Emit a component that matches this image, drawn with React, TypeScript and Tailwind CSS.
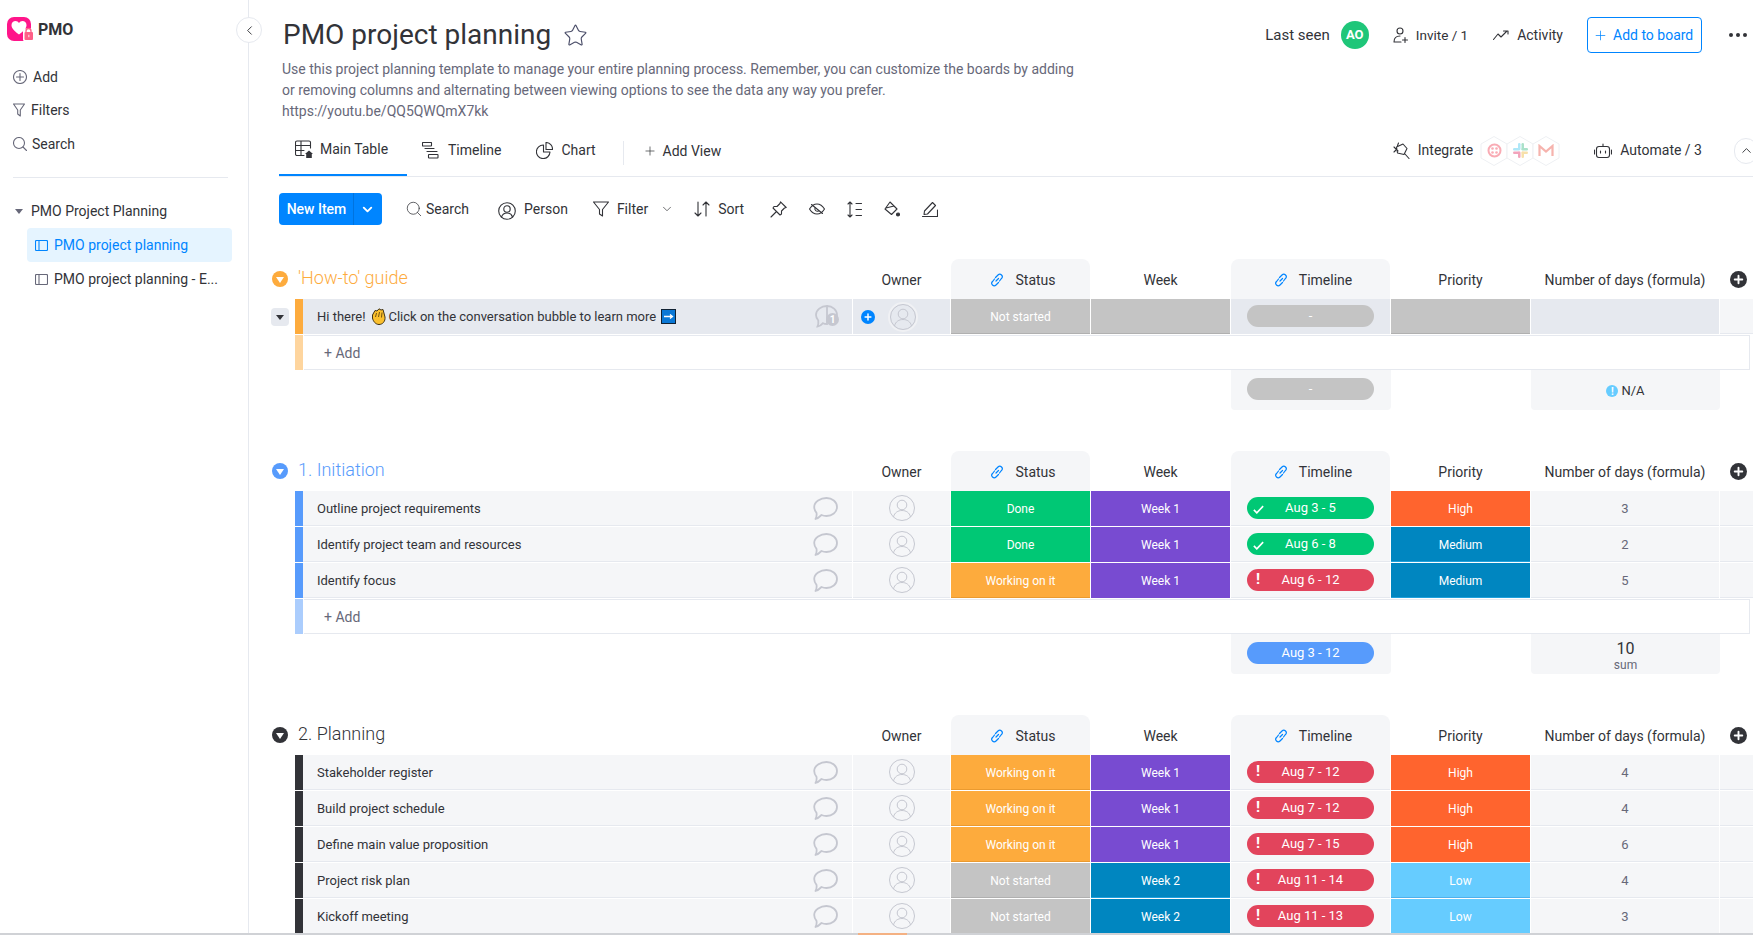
import * as React from "react";
import { ChevronDown, ChevronLeft, ChevronUp, Plus, Search, Star } from "lucide-react";

const gray = "#676879";

function Ico({ w = 18, h = 18, vb = "0 0 20 20", children, className = "" }: { w?: number; h?: number; vb?: string; children: React.ReactNode; className?: string }) {
  return (
    <svg width={w} height={h} viewBox={vb} fill="none" stroke="currentColor" strokeWidth="1.1" strokeLinecap="round" strokeLinejoin="round" className={"shrink-0 " + className}>
      {children}
    </svg>
  );
}

function Logo() {
  return (
    <svg width="27" height="26" viewBox="0 0 27 26" className="shrink-0">
      <rect x="0" y="1" width="24" height="24" rx="7" fill="#ff158a" />
      <path d="M12 18.5 C6 14 4.5 11.5 4.5 9 C4.5 6.5 6.5 5 8.5 5 C10 5 11.2 5.8 12 7 C12.8 5.8 14 5 15.5 5 C17.5 5 19.5 6.5 19.5 9 C19.5 11.5 18 14 12 18.5Z" fill="#fff" />
      <rect x="16" y="12.5" width="11" height="13" rx="2" fill="#fff" />
      <path d="M19 16.5 V15 a2.5 2.5 0 0 1 5 0 V16.5" fill="none" stroke="#ff5f87" strokeWidth="1.3" />
      <rect x="17.5" y="16" width="8.5" height="8" rx="1" fill="#ff5f87" />
      <rect x="21.2" y="18.8" width="1.2" height="2.4" fill="#ffd0dc" />
    </svg>
  );
}

function BoardIcon() {
  return (
    <Ico w={13} h={11} vb="0 0 13 11">
      <rect x="0.5" y="0.5" width="12" height="10" rx="1" />
      <path d="M4 0.5 V10.5" />
    </Ico>
  );
}

function SideLink({ icon, label, textClass, height }: { icon: React.ReactNode; label: string; textClass: string; height: string }) {
  return (
    <div className={"flex items-center pl-[13px] text-[14px] text-[#323338] " + height}>
      <span className="flex text-[#676879]">{icon}</span>
      <span className={textClass}>{label}</span>
    </div>
  );
}

function Sidebar() {
  return (
    <aside className="relative flex w-[249px] shrink-0 flex-col border-r border-[#e6e9ef]">
      <div className="mt-[16px] flex h-[26px] items-center pl-[7px]">
        <Logo />
        <span className="ml-[4px] mt-[1px] text-[16px] font-bold text-[#323338]">PMO</span>
      </div>
      <div className="mt-[19px] flex flex-col">
        <SideLink label="Add" height="h-[32px]" textClass="ml-[6px]" icon={<Ico w={14} h={14} vb="0 0 14 14"><circle cx="7" cy="7" r="6.5" /><path d="M7 3.5 V10.5 M3.5 7 H10.5" /></Ico>} />
        <SideLink label="Filters" height="h-[34px]" textClass="ml-[6px]" icon={<Ico w={12} h={14} vb="0 0 12 14"><path d="M0.5 1 H11.5 L7.3 7 V13 L4.7 11 V7 Z" /></Ico>} />
        <SideLink label="Search" height="h-[34px]" textClass="ml-[5px]" icon={<Ico w={14} h={14} vb="0 0 14 14"><circle cx="6" cy="6" r="5.5" /><path d="M10 10 L13.5 13.5" /></Ico>} />
      </div>
      <div className="mx-[13px] mt-[16px] w-[215px] border-t border-[#e6e9ef]" />
      <div className="mt-[17px] flex h-[33px] items-center pl-[15px] text-[14px] text-[#323338]">
        <span className="h-0 w-0 border-x-[4px] border-t-[5px] border-x-transparent border-t-[#676879]" />
        <span className="ml-[8px]">PMO Project Planning</span>
      </div>
      <div className="ml-[27px] flex h-[34px] w-[205px] items-center rounded-[4px] bg-[#e5f4ff] pl-[8px] text-[14px] text-[#0085ff]">
        <BoardIcon />
        <span className="ml-[6px]">PMO project planning</span>
      </div>
      <div className="ml-[27px] flex h-[34px] w-[205px] items-center pl-[8px] text-[14px] text-[#323338]">
        <span className="text-[#676879]"><BoardIcon /></span>
        <span className="ml-[6px] truncate">PMO project planning - E...</span>
      </div>
      <button className="absolute left-[236px] top-[17px] flex h-[26px] w-[26px] items-center justify-center rounded-full border border-[#e6e9ef] bg-white text-[#323338]">
        <ChevronLeft size={15} strokeWidth={1.5} />
      </button>
    </aside>
  );
}

function TopActions() {
  return (
    <div className="flex h-[40px] items-center pr-[6px] text-[14px] text-[#323338]">
      <span className="text-[15px]">Last seen</span>
      <span className="ml-[11px] flex h-[28px] w-[28px] items-center justify-center rounded-full bg-[#1fc679] text-[13px] font-bold text-white">AO</span>
      <span className="ml-[24px] text-[#323338]">
        <Ico w={15} h={16} vb="0 0 15 16"><circle cx="7" cy="4" r="3" /><path d="M1 15 C1 11 3 9 7 9 M1 15 H8 M9.5 13 H14.5 M12 10.5 V15.5" /></Ico>
      </span>
      <span className="ml-[8px] text-[13.5px] text-[#323338]">Invite / 1</span>
      <span className="ml-[25px]">
        <Ico w={16} h={10} vb="0 0 16 10"><path d="M0.5 9.5 L5 4 L8 7 L14 1 M10.5 1 H15 V4" /></Ico>
      </span>
      <span className="ml-[8px]">Activity</span>
      <button className="ml-[24px] flex h-[36px] w-[115px] items-center rounded-[4px] border border-[#0085ff] pl-[5px] text-[#0085ff]">
        <Plus size={15} strokeWidth={1.2} />
        <span className="ml-[5px]">Add to board</span>
      </button>
      <span className="ml-[27px] flex gap-[3px]">
        <i className="h-[4px] w-[4px] rounded-full bg-[#323338]" />
        <i className="h-[4px] w-[4px] rounded-full bg-[#323338]" />
        <i className="h-[4px] w-[4px] rounded-full bg-[#323338]" />
      </span>
    </div>
  );
}

function Hex({ children }: { children: React.ReactNode }) {
  return (
    <span className="relative -mx-px flex h-[30px] w-[28px] items-center justify-center">
      <svg width="28" height="30" viewBox="0 0 28 30" className="absolute inset-0" fill="#fff" stroke="#eef0f3">
        <path d="M14 0.5 L27 8 V22 L14 29.5 L1 22 V8 Z" />
      </svg>
      <span className="relative flex opacity-40">{children}</span>
    </span>
  );
}

function Tabs() {
  return (
    <div className="flex h-[55px] border-b border-[#e6e9ef] text-[14px] text-[#323338]">
      <div className="flex h-[54px] w-[128px] items-center border-b-2 border-[#0085ff] pl-[16px] pt-[3px]">
        <Ico w={20} h={20} vb="0 0 20 20"><path d="M9 15.5 H2 a1.5 1.5 0 0 1 -1.5 -1.5 V2.500 A1.500 1.500 0 0 1 2 1 H14 a1.500 1.500 0 0 1 1.500 1.500 V8 M0.500 5.500 H15.500 M0.500 10.500 H9 M6 1 V15.500" /><path d="M10 14 L14 10.500 L18 14 H16.800 V18 H11.200 V14 Z" fill="currentColor" stroke="none" /></Ico>
        <span className="ml-[5px]">Main Table</span>
      </div>
      <div className="ml-[15px] flex items-center pt-[3px]">
        <Ico w={17} h={17} vb="0 0 17 17"><rect x="0.500" y="0.500" width="9" height="3.500" rx="0.500" /><path d="M3 6.500 H12" /><rect x="6.500" y="12.500" width="9.500" height="3.500" rx="0.500" /><path d="M5 9.500 H15" /></Ico>
        <span className="ml-[9px]">Timeline</span>
      </div>
      <div className="ml-[35px] flex items-center pt-[3px]">
        <Ico w={17} h={17} vb="0 0 17 17"><path d="M7.500 3 A6.800 6.800 0 1 0 14 10 H7.500 Z" /><path d="M10 0.500 A6.500 6.500 0 0 1 16.500 7.500 H10 Z" /></Ico>
        <span className="ml-[8px]">Chart</span>
      </div>
      <div className="ml-[27px] mt-[19px] h-[24px] border-l border-[#e6e9ef]" />
      <div className="ml-[19px] flex items-center pt-[4px]">
        <Plus size={14} strokeWidth={1.2} />
        <span className="ml-[6px]">Add View</span>
      </div>
      <div className="ml-auto flex items-center pt-[3px]">
        <Ico w={17} h={17} vb="0 0 17 17"><path d="M1 5 L5 9 M5.500 1 L4.500 3.500 M3.500 5 L10 2 L14 6.500 L11 12.500 L4.500 11 Z" /><path d="M12 12 L16 16.500 M1 10 L3 8" /></Ico>
        <span className="ml-[8px]">Integrate</span>
        <span className="ml-[8px] flex">
          <Hex><svg width="15" height="15" viewBox="0 0 15 15"><circle cx="7.500" cy="7.500" r="6" fill="none" stroke="#f22f46" strokeWidth="2" /><g fill="#f22f46"><circle cx="5.500" cy="5.500" r="1.300" /><circle cx="9.500" cy="5.500" r="1.300" /><circle cx="5.500" cy="9.500" r="1.300" /><circle cx="9.500" cy="9.500" r="1.300" /></g></svg></Hex>
          <Hex><svg width="15" height="15" viewBox="0 0 15 15"><rect x="0" y="5" width="7" height="2.500" rx="1.200" fill="#36c5f0" /><rect x="5" y="0" width="2.500" height="7" rx="1.200" fill="#36c5f0" /><rect x="8.500" y="0" width="2.500" height="7" rx="1.200" fill="#2eb67d" /><rect x="8.500" y="5" width="6.500" height="2.500" rx="1.200" fill="#2eb67d" /><rect x="8.500" y="8.500" width="6.500" height="2.500" rx="1.200" fill="#ecb22e" /><rect x="8.500" y="8.500" width="2.500" height="6.500" rx="1.200" fill="#ecb22e" /><rect x="0" y="8.500" width="7" height="2.500" rx="1.200" fill="#e01e5a" /><rect x="5" y="8.500" width="2.500" height="6.500" rx="1.200" fill="#e01e5a" /></svg></Hex>
          <Hex><svg width="16" height="13" viewBox="0 0 16 13" fill="none" stroke="#ea4335" strokeWidth="2.200"><path d="M1.500 12 V2 L8 7.500 L14.500 2 V12" /></svg></Hex>
        </span>
        <span className="ml-[35px]">
          <Ico w={18} h={16} vb="0 0 18 16"><rect x="2.500" y="3.500" width="13" height="11" rx="2.500" /><path d="M9 3.500 V1 M0.500 7 V11 M17.500 7 V11 M6.500 8 V10 M11.500 8 V10" /></Ico>
        </span>
        <span className="ml-[8px]">Automate / 3</span>
        <span className="-mr-[5px] ml-[32px] flex h-[26px] w-[24px] shrink-0 items-center justify-center rounded-full border border-[#e6e9ef]">
          <ChevronUp size={15} strokeWidth={1.5} />
        </span>
      </div>
    </div>
  );
}

function Toolbar() {
  return (
    <div className="mt-[16px] flex h-[32px] items-center text-[14px] text-[#323338]">
      <div className="flex h-[32px] w-[103px] items-center rounded-[4px] bg-[#0085ff] text-white">
        <span className="w-[75px] border-r border-[#0073de] pl-[1px] text-center text-[14px] font-medium leading-[32px]">New Item</span>
        <ChevronDown size={15} strokeWidth={3} className="ml-[6px]" />
      </div>
      <Search size={18} strokeWidth={1} className="ml-[23px]" />
      <span className="ml-[3px]">Search</span>
      <span className="ml-[29px] mt-[4px]">
        <Ico w={18} h={18} vb="0 0 18 18"><circle cx="9" cy="9" r="8.300" /><circle cx="9" cy="7" r="3.200" /><path d="M3.500 15 C4.500 12 6 11 9 11 C12 11 13.500 12 14.500 15" /></Ico>
      </span>
      <span className="ml-[8px]">Person</span>
      <span className="ml-[25px]">
        <Ico w={16} h={16} vb="0 0 16 16"><path d="M0.500 1 H15.500 L9.500 8.500 V15 L6.500 13 V8.500 Z" /></Ico>
      </span>
      <span className="ml-[8px]">Filter</span>
      <ChevronDown size={14} strokeWidth={1.2} className="ml-[12px]" />
      <span className="ml-[20px]">
        <Ico w={16} h={16} vb="0 0 16 16"><path d="M4 1 V15 M1 12 L4 15 L7 12 M12 15 V1 M9 4 L12 1 L15 4" /></Ico>
      </span>
      <span className="ml-[8px]">Sort</span>
      <span className="ml-[26px]">
        <Ico w={17} h={17} vb="0 0 17 17"><path d="M10.500 0.800 L16.200 6.500 L14.500 7 L11.500 10 L11.500 13 L10 14 L3 7 L4 5.500 L7 5.500 L10 2.500 Z M6 11 L1 16" /></Ico>
      </span>
      <span className="ml-[22px]">
        <Ico w={16} h={12} vb="0 0 16 12"><path d="M0.500 6 C3 2 5.500 1 8 1 C10.500 1 13 2 15.500 6 C13 10 10.500 11 8 11 C5.500 11 3 10 0.500 6 Z" /><path d="M2.500 1.500 L13.500 10.500" /><path d="M6 5 A2.500 2.500 0 0 0 9.500 8" /></Ico>
      </span>
      <span className="ml-[22px]">
        <Ico w={15} h={17} vb="0 0 15 17"><path d="M3 1 V16 M1 3 L3 1 L5 3 M1 14 L3 16 L5 14 M9 2.500 H14.500 M9 8.500 H14.500 M9 14.500 H14.500" /></Ico>
      </span>
      <span className="ml-[22px]">
        <Ico w={16} h={17} vb="0 0 16 17"><path d="M6 1 L13 8 L7.500 13.500 L1 8 Z M2 7 L10 5" /><circle cx="14" cy="13.500" r="1.500" fill="currentColor" /></Ico>
      </span>
      <span className="ml-[22px]">
        <Ico w={16} h={16} vb="0 0 16 16"><path d="M2 13.500 L2.500 10 L10.500 1.500 L13.500 4.500 L5.500 13 Z M0.500 15.500 H15.500 V9" /></Ico>
      </span>
    </div>
  );
}

const fills: Record<string, string> = {
  "Not started": "bg-[#c4c4c4] border-[#b0b0b0]",
  Done: "bg-[#00c875] border-[#00c875]",
  "Working on it": "bg-[#fdab3d] border-[#ea9a30]",
  "Week 1": "bg-[#784bd1] border-[#784bd1]",
  "Week 2": "bg-[#0086c0] border-[#1fa0dc]",
  High: "bg-[#ff642e] border-[#ff642e]",
  Medium: "bg-[#0086c0] border-[#1fa0dc]",
  Low: "bg-[#66ccff] border-[#4fb0ea]",
  Empty: "bg-[#c4c4c4] border-[#b0b0b0]",
};

function Fill({ label }: { label: string }) {
  return (
    <div className={"flex h-[35px] w-[139px] shrink-0 items-center justify-center border-b pt-[2px] text-[12px] font-normal text-white " + fills[label]}>
      {label === "Empty" ? "" : label}
    </div>
  );
}

function LinkIcon() {
  return (
    <svg width="14" height="14" viewBox="0 0 14 14" fill="none" stroke="#0085ff" strokeWidth="1.200" strokeLinecap="round" className="shrink-0">
      <path d="M6 8 L8.500 5.500 M5.500 4.500 L8 2 A2.100 2.100 0 0 1 11.500 5.500 L9.500 8 M8.500 9.500 L6 12 A2.100 2.100 0 0 1 2.500 8.500 L4.500 6" />
    </svg>
  );
}

function Toggle({ color }: { color: string }) {
  return (
    <span className={"ml-[2px] flex h-[16px] w-[16px] shrink-0 items-center justify-center rounded-full " + color}>
      <span className="mt-[2px] h-0 w-0 border-x-[4.5px] border-t-[6px] border-x-transparent border-t-white" />
    </span>
  );
}

function GroupHeader({ title, toggle, titleColor }: { title: string; toggle: string; titleColor: string }) {
  return (
    <div className="flex h-[40px] items-stretch text-[14px] text-[#323338]">
      <div className="flex w-[583px] shrink-0 items-center pb-[1px]">
        <Toggle color={toggle} />
        <span className={"ml-[10px] -mt-[2px] text-[18px] font-light " + titleColor}>{title}</span>
      </div>
      <div className="flex w-[97px] shrink-0 items-center justify-center pt-[2px]">Owner</div>
      <div className="ml-px flex w-[139px] shrink-0 items-center justify-center gap-[11px] rounded-t-[8px] bg-[#f5f6f8] pl-[5px] pt-[2px]">
        <LinkIcon />
        Status
      </div>
      <div className="ml-px flex w-[139px] shrink-0 items-center justify-center pt-[2px]">Week</div>
      <div className="ml-px flex w-[159px] shrink-0 items-center justify-center gap-[11px] rounded-t-[8px] bg-[#f5f6f8] pl-[5px] pt-[2px]">
        <LinkIcon />
        Timeline
      </div>
      <div className="ml-px flex w-[139px] shrink-0 items-center justify-center pt-[2px]">Priority</div>
      <div className="ml-px flex w-[188px] shrink-0 items-center justify-center pt-[2px]">Number of days (formula)</div>
      <div className="ml-[11px] flex items-center">
        <span className="flex h-[17px] w-[17px] items-center justify-center rounded-full bg-[#323338] text-white">
          <Plus size={13} strokeWidth={3.5} />
        </span>
      </div>
    </div>
  );
}

function Bubble() {
  return (
    <svg width="25" height="23" viewBox="0 0 25 23" fill="none" stroke="#c5c7d0" strokeWidth="1.800" strokeLinejoin="round" className="shrink-0">
      <path d="M13.500 1 C19 1 24 4.800 24 10 C24 15.500 19 19 13.500 19 C11.500 19 9.800 18.600 8.500 18 C6.500 20 4.500 21.500 2.500 22 C3.500 20 3.800 17.500 3.500 15.800 C2 14 1.200 12 1.200 10 C1.200 4.800 7.500 1 13.500 1 Z" />
    </svg>
  );
}

function Avatar() {
  return (
    <svg width="26" height="26" viewBox="0 0 26 26" fill="none" stroke="#c5c7d0" strokeWidth="1" className="shrink-0">
      <circle cx="13" cy="13" r="12.500" />
      <circle cx="13" cy="10" r="4.800" />
      <path d="M4.500 22 C5.500 17.500 9 15.500 13 15.500 C17 15.500 20.500 17.500 21.500 22" />
    </svg>
  );
}

function Pill({ text, tone }: { text: string; tone: "done" | "late" | "blue" | "empty" }) {
  const bg = { done: "bg-[#00c875]", late: "bg-[#e2445c]", blue: "bg-[#579bfc]", empty: "bg-[#c4c4c4]" }[tone];
  return (
    <div className={"relative flex h-[22px] w-[127px] items-center justify-center rounded-full text-[13px] text-white " + bg}>
      {tone === "done" && (
        <svg width="11" height="9" viewBox="0 0 13 10" fill="none" stroke="#fff" strokeWidth="1.900" className="absolute left-[6px] top-[8px]">
          <path d="M1 5.500 L4.500 9 L12 1" />
        </svg>
      )}
      {tone === "late" && <span className="absolute left-[9px] top-[2px] text-[15px] font-bold leading-[17px]">!</span>}
      {text}
    </div>
  );
}

type Item = { name: string; status: string; week: string; range: string; tone: "done" | "late"; priority: string; days: string };

function Row({ bar, item }: { bar: string; item: Item }) {
  return (
    <div className="mb-px flex h-[35px] text-[13px]">
      <div className="w-[25px] shrink-0" />
      <div className={"w-[8px] shrink-0 " + bar} />
      <div className="flex w-[549px] shrink-0 items-center justify-between border-b border-[#e6e9ef] bg-[#f5f6f8] pl-[14px] pr-[14px] text-[#323338]">
        <span className="mt-[2px]">{item.name}</span>
        <Bubble />
      </div>
      <div className="ml-px flex w-[97px] shrink-0 items-center justify-center border-b border-[#e6e9ef] bg-[#f5f6f8]">
        <Avatar />
      </div>
      <div className="ml-px"><Fill label={item.status} /></div>
      <div className="ml-px"><Fill label={item.week} /></div>
      <div className="ml-px w-[159px] shrink-0 border-b border-[#e6e9ef] bg-[#f5f6f8] pl-[16px] pt-[6px]">
        <Pill text={item.range} tone={item.tone} />
      </div>
      <div className="ml-px"><Fill label={item.priority} /></div>
      <div className="ml-px flex w-[188px] shrink-0 items-center justify-center border-b border-[#e6e9ef] bg-[#f5f6f8] pt-[2px] text-[#676879]">{item.days}</div>
      <div className="ml-px flex-1 border-b border-[#e6e9ef] bg-[#f5f6f8]" />
    </div>
  );
}

function GuideRow() {
  return (
    <div className="mb-px flex h-[35px] text-[13px]">
      <div className="flex w-[25px] shrink-0 items-center pl-[1px]">
        <span className="flex h-[18px] w-[18px] items-center justify-center rounded-[4px] bg-[#e6e9ef]">
          <span className="mt-[2px] h-0 w-0 border-x-[4.500px] border-t-[5px] border-x-transparent border-t-[#323338]" />
        </span>
      </div>
      <div className="w-[8px] shrink-0 bg-[#fdab3d]" />
      <div className="flex w-[549px] shrink-0 items-center bg-[#e6e9ef] pl-[14px] pr-[14px] text-[#323338]">
        <span>Hi there!</span>
        <svg width="15" height="17" viewBox="0 0 15 17" className="ml-[5px] shrink-0">
          <path d="M1.500 7 L4 2.500 L6 3 L8 0.800 L10 2 L12 1.500 L14 9 C14.500 13.500 11.500 16.500 8 16.500 C4.500 16.500 2 13 1.500 10 Z" fill="#fbc02d" stroke="#3f3216" strokeWidth="1" />
          <path d="M5.500 5 L4.500 9 M8.500 4 L7.500 9 M11 4.500 L10.500 9.500" stroke="#6f5212" strokeWidth="1" fill="none" />
        </svg>
        <span className="ml-[3px]">Click on the conversation bubble to learn more</span>
        <svg width="15" height="15" viewBox="0 0 15 15" className="ml-[5px] shrink-0">
          <rect x="0.500" y="0.500" width="14" height="14" fill="#0a78d6" stroke="#123" />
          <path d="M3 7.500 H11 M9 5.500 L11.500 7.500 L9 9.500" stroke="#fff" strokeWidth="1.300" fill="none" />
        </svg>
        <span className="relative ml-auto">
          <svg width="23" height="23" viewBox="0 0 23 23" fill="none" stroke="#c5c7d0" strokeWidth="1.800">
            <path d="M12 1 C17.500 1 22 5 22 10 C22 11 21.800 12 21.500 13 M12 19 C10.500 19 9 18.800 8 18.200 C6.500 20 4.500 21.500 2.500 21.500 C3.500 19.500 3.500 17.500 3.300 15.500 C2 14 1 12 1 10 C1 5 6 1 12 1 Z" />
          </svg>
          <span className="absolute -right-[1px] bottom-[2px] flex h-[13px] w-[13px] items-center justify-center rounded-full bg-[#c5c7d0] text-[10px] font-bold text-white">1</span>
        </span>
      </div>
      <div className="ml-px flex w-[97px] shrink-0 items-center bg-[#e6e9ef] pl-[8px]">
        <span className="flex h-[14px] w-[14px] items-center justify-center rounded-full bg-[#0085ff] text-white">
          <Plus size={10} strokeWidth={3.500} />
        </span>
        <span className="ml-[13px] rounded-full border-[2px] border-[#f0f1f4]">
          <Avatar />
        </span>
      </div>
      <div className="ml-px"><Fill label="Not started" /></div>
      <div className="ml-px"><Fill label="Empty" /></div>
      <div className="ml-px w-[159px] shrink-0 bg-[#e6e9ef] pl-[16px] pt-[6px]">
        <Pill text="-" tone="empty" />
      </div>
      <div className="ml-px"><Fill label="Empty" /></div>
      <div className="ml-px w-[188px] shrink-0 bg-[#e6e9ef]" />
      <div className="ml-px flex-1 border-b border-[#e6e9ef] bg-[#f5f6f8]" />
    </div>
  );
}

function AddRow({ bar }: { bar: string }) {
  return (
    <div className="flex h-[35px] text-[14px] text-[#676879]">
      <div className="w-[25px] shrink-0" />
      <div className={"w-[8px] shrink-0 " + bar} />
      <div className="ml-px mr-[3px] flex flex-1 items-center border-y border-r border-[#e6e9ef] pl-[20px] pt-[2px]">+ Add</div>
    </div>
  );
}

function Summary({ pill, number }: { pill: React.ReactNode; number: React.ReactNode }) {
  return (
    <div className="flex h-[40px]">
      <div className="w-[961px] shrink-0" />
      <div className="w-[160px] shrink-0 rounded-b-[4px] bg-[#f5f6f8] pl-[16px] pt-[8px]">{pill}</div>
      <div className="w-[140px] shrink-0" />
      <div className="flex w-[189px] shrink-0 flex-col items-center justify-center rounded-b-[4px] bg-[#f5f6f8]">{number}</div>
    </div>
  );
}

const initiation: Item[] = [
  { name: "Outline project requirements", status: "Done", week: "Week 1", range: "Aug 3 - 5", tone: "done", priority: "High", days: "3" },
  { name: "Identify project team and resources", status: "Done", week: "Week 1", range: "Aug 6 - 8", tone: "done", priority: "Medium", days: "2" },
  { name: "Identify focus", status: "Working on it", week: "Week 1", range: "Aug 6 - 12", tone: "late", priority: "Medium", days: "5" },
];

const planning: Item[] = [
  { name: "Stakeholder register", status: "Working on it", week: "Week 1", range: "Aug 7 - 12", tone: "late", priority: "High", days: "4" },
  { name: "Build project schedule", status: "Working on it", week: "Week 1", range: "Aug 7 - 12", tone: "late", priority: "High", days: "4" },
  { name: "Define main value proposition", status: "Working on it", week: "Week 1", range: "Aug 7 - 15", tone: "late", priority: "High", days: "6" },
  { name: "Project risk plan", status: "Not started", week: "Week 2", range: "Aug 11 - 14", tone: "late", priority: "Low", days: "4" },
  { name: "Kickoff meeting", status: "Not started", week: "Week 2", range: "Aug 11 - 13", tone: "late", priority: "Low", days: "3" },
];

export default function App() {
  return (
    <div className="relative flex h-screen w-screen overflow-hidden bg-white font-['Roboto',sans-serif]">
      <Sidebar />
      <main className="min-w-0 flex-1 pl-[30px]">
        <div className="mt-[15px] flex h-[40px] items-center justify-between pl-[4px]">
          <div className="flex items-center">
            <h1 className="text-[28px] font-normal text-[#323338]">PMO project planning</h1>
            <Star size={25} strokeWidth={1.1} className="ml-[12px] text-[#4b4e69]" />
          </div>
          <TopActions />
        </div>
        <p className="mt-[4px] w-[810px] pl-[3px] text-[14px] leading-[21px]" style={{ color: gray }}>
          Use this project planning template to manage your entire planning process. Remember, you can customize the boards by adding
          <br />
          or removing columns and alternating between viewing options to see the data any way you prefer.
          <br />
          https://youtu.be/QQ5QWQmX7kk
        </p>
        <Tabs />
        <Toolbar />
        <div className="-ml-[9px] mt-[34px]">
          <GroupHeader title="'How-to' guide" toggle="bg-[#fdab3d]" titleColor="text-[#fdab3d]" />
          <GuideRow />
          <AddRow bar="bg-[#fed59e]" />
          <Summary
            pill={<Pill text="-" tone="empty" />}
            number={
              <div className="flex items-center gap-[3px] pt-[2px] text-[13px] text-[#323338]">
                <span className="flex h-[12px] w-[12px] items-center justify-center rounded-full bg-[#66ccff] text-[10px] font-bold text-white">!</span>
                N/A
              </div>
            }
          />
          <div className="mt-[41px]">
            <GroupHeader title="1. Initiation" toggle="bg-[#579bfc]" titleColor="text-[#579bfc]" />
            {initiation.map((item) => (
              <Row key={item.name} bar="bg-[#579bfc]" item={item} />
            ))}
            <AddRow bar="bg-[#abcdfd]" />
            <Summary
              pill={<Pill text="Aug 3 - 12" tone="blue" />}
              number={
                <div className="flex flex-col items-center pt-[4px]">
                  <span className="text-[16px] leading-[18px] text-[#323338]">10</span>
                  <span className="text-[12px] leading-[14px] text-[#676879]">sum</span>
                </div>
              }
            />
          </div>
          <div className="mt-[41px]">
            <GroupHeader title="2. Planning" toggle="bg-[#323338]" titleColor="text-[#323338]" />
            {planning.map((item) => (
              <Row key={item.name} bar="bg-[#323338]" item={item} />
            ))}
          </div>
        </div>
      </main>
      <div className="absolute inset-x-0 bottom-0 h-[2px] bg-[#d0d2d6]">
        <div className="ml-[858px] h-full w-[49px] bg-[#f4b183]" />
      </div>
    </div>
  );
}
